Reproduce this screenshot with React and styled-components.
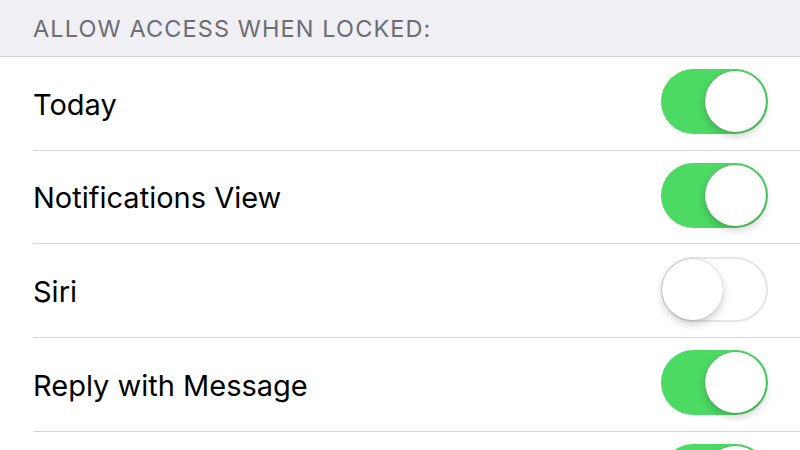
import React from "react";
import styled, { createGlobalStyle } from "styled-components";

const Global = createGlobalStyle`
  html, body { margin: 0; padding: 0; background: #ffffff; }
  body { width: 800px; height: 450px; overflow: hidden; }
`;

const Page = styled.div`
  width: 800px;
  height: 450px;
  overflow: hidden;
  background: #ffffff;
  font-family: Inter, "Liberation Sans", sans-serif;
`;

const Header = styled.div`
  height: 56px;
  background: #efeff4;
  border-bottom: 1px solid #d1d1d6;
  display: flex;
  align-items: center;
  padding-left: 33px;
  box-sizing: content-box;
`;

const HeaderText = styled.span`
  font-size: 23.5px;
  color: #6d6d72;
  letter-spacing: 1.1px;
  margin-top: 1px;
`;

const List = styled.div`
  padding-left: 33px;
`;

const Row = styled.div`
  height: 93.67px;
  box-sizing: border-box;
  border-bottom: 1px solid #d5d5d9;
  display: flex;
  align-items: center;
  justify-content: space-between;
  padding-right: 32px;
`;

const Label = styled.span`
  font-size: 29px;
  color: #000;
  margin-top: 2px;
`;

const Track = styled.div`
  width: 107px;
  height: 65px;
  border-radius: 33px;
  box-sizing: border-box;
  display: flex;
  align-items: center;
  justify-content: ${(p) => (p.$on ? "flex-end" : "flex-start")};
  padding: 2px;
  margin-top: -3px;
  margin-left: auto;
  background: ${(p) => (p.$on ? "#4cd964" : "#ffffff")};
  border: ${(p) => (p.$on ? "none" : "2px solid #e5e5ea")};
`;

const Knob = styled.div`
  width: 61px;
  height: 61px;
  border-radius: 50%;
  background: #ffffff;
  margin: ${(p) => (p.$on ? "0" : "0 0 0 -3px")};
  box-shadow: 0 4px 9px rgba(0, 0, 0, 0.2), 0 0 0 0.5px rgba(0, 0, 0, 0.14);
`;

const items = [
  { label: "Today", on: true },
  { label: "Notifications View", on: true },
  { label: "Siri", on: false },
  { label: "Reply with Message", on: true },
  { label: "", on: true },
];

export default function App() {
  return (
    <Page>
      <Global />
      <Header>
        <HeaderText>ALLOW ACCESS WHEN LOCKED:</HeaderText>
      </Header>
      <List>
        {items.map((it, i) => (
          <Row key={i}>
            {it.label && <Label>{it.label}</Label>}
            <Track $on={it.on}>
              <Knob $on={it.on} />
            </Track>
          </Row>
        ))}
      </List>
    </Page>
  );
}
